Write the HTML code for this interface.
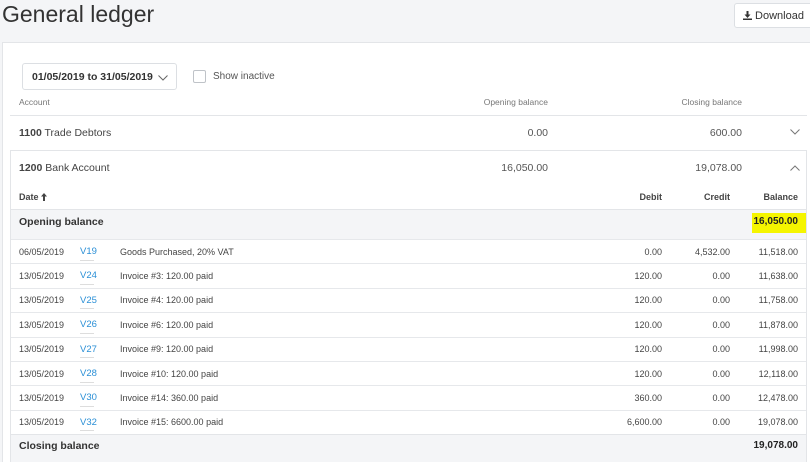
<!DOCTYPE html>
<html><head><meta charset="utf-8"><style>
*{margin:0;padding:0;box-sizing:border-box}
html,body{width:810px;height:462px;overflow:hidden}
body{background:#f4f5f7;font-family:"Liberation Sans",sans-serif;color:#3b3b3b;position:relative}
.a{position:absolute;white-space:nowrap}
.r{text-align:right}
.panel{position:absolute;left:2px;top:42px;width:820px;height:430px;background:#fff;border:1px solid #e3e5e8}
.box{position:absolute;left:10px;top:150px;width:797px;height:320px;border:1px solid #e3e5e8;background:#fff}
.row{position:absolute;left:11px;width:795px;border-top:1px solid #e6e8eb}
.s{font-size:9px;color:#444}
.lnk{color:#2a8fd6;font-size:9.5px}
</style></head><body>
<div class="a" style="left:2px;top:1px;font-size:23px;color:#333">General ledger</div>
<div class="a" style="left:734px;top:3px;width:80px;height:25px;background:#fff;border:1px solid #dcdfe3;border-radius:3px;font-size:11px;padding:6px 0 0 8px;color:#333">
<svg width="9" height="9" viewBox="0 0 9 9" style="vertical-align:-1px"><path d="M3.5 0h2v3.5h2L4.5 7 1.5 3.5h2z" fill="#333"/><rect x="0" y="7.5" width="9" height="1.5" fill="#333"/></svg> Download</div>
<div class="panel"></div>
<div class="a" style="left:22px;top:63px;width:155px;height:27px;border:1px solid #dcdfe3;border-radius:3px;font-size:10.5px;font-weight:bold;padding:7px 0 0 9px;color:#333">01/05/2019 to 31/05/2019
<svg width="10" height="6" viewBox="0 0 10 6" style="position:absolute;left:135px;top:11px"><path d="M0.5 0.5L5 5 9.5 0.5" fill="none" stroke="#666"/></svg></div>
<div class="a" style="left:193px;top:70px;width:13px;height:13px;border:1px solid #bfc3c8;border-radius:2px"></div>
<div class="a" style="left:213px;top:71px;font-size:10px;color:#555">Show inactive</div>
<div class="a" style="left:19px;top:97px;font-size:8.5px;color:#777">Account</div>
<div class="a r" style="left:448px;top:97px;width:100px;font-size:8.5px;color:#777">Opening balance</div>
<div class="a r" style="left:642px;top:97px;width:100px;font-size:8.5px;color:#777">Closing balance</div>
<div class="a" style="left:10px;top:115px;width:797px;border-top:1px solid #e3e5e8"></div>
<div class="a" style="left:19px;top:127px;font-size:10.5px;color:#444"><b>1100</b> Trade Debtors</div>
<div class="a r" style="left:448px;top:127px;width:100px;font-size:10.5px;color:#555">0.00</div>
<div class="a r" style="left:642px;top:127px;width:100px;font-size:10.5px;color:#555">600.00</div>
<svg class="a" style="left:790px;top:129px" width="10" height="6" viewBox="0 0 10 6"><path d="M0.5 0.5L5 5 9.5 0.5" fill="none" stroke="#777"/></svg>
<div class="box"></div>
<div class="a" style="left:19px;top:162px;font-size:10.5px;color:#444"><b>1200</b> Bank Account</div>
<div class="a r" style="left:448px;top:162px;width:100px;font-size:10.5px;color:#555">16,050.00</div>
<div class="a r" style="left:642px;top:162px;width:100px;font-size:10.5px;color:#555">19,078.00</div>
<svg class="a" style="left:790px;top:165px" width="10" height="6" viewBox="0 0 10 6"><path d="M0.5 5.5L5 1 9.5 5.5" fill="none" stroke="#777"/></svg>
<div class="a" style="left:19px;top:192px;font-size:9px;font-weight:bold;color:#444">Date</div>
<svg class="a" style="left:41px;top:193px" width="6" height="8" viewBox="0 0 6 8"><path d="M3 0L0 3.5h2V8h2V3.5h2z" fill="#444"/></svg>
<div class="a r" style="left:600px;top:192px;width:62px;font-size:9px;font-weight:bold;color:#444">Debit</div>
<div class="a r" style="left:670px;top:192px;width:60px;font-size:9px;font-weight:bold;color:#444">Credit</div>
<div class="a r" style="left:730px;top:192px;width:68px;font-size:9px;font-weight:bold;color:#444">Balance</div>
<div class="a" style="left:11px;top:209px;width:795px;height:30px;background:#f4f5f7;border-top:1px solid #e3e5e8"></div>
<div class="a" style="left:19px;top:216px;font-size:10.5px;font-weight:bold;color:#333">Opening balance</div>
<div class="a" style="left:752px;top:213px;width:54px;height:20px;background:#f5f500"></div>
<div class="a r" style="left:730px;top:216px;width:68px;font-size:10px;font-weight:bold;color:#222">16,050.00</div>
<div id="rows"></div>
<div class="a" style="left:11px;top:434px;width:795px;height:30px;background:#f4f5f7;border-top:1px solid #e3e5e8"></div>
<div class="a" style="left:19px;top:440px;font-size:10.5px;font-weight:bold;color:#333">Closing balance</div>
<div class="a r" style="left:730px;top:440px;width:68px;font-size:10px;font-weight:bold;color:#222">19,078.00</div>
<script>
var d=[["06/05/2019","V19","Goods Purchased, 20% VAT","0.00","4,532.00","11,518.00"],
["13/05/2019","V24","Invoice #3: 120.00 paid","120.00","0.00","11,638.00"],
["13/05/2019","V25","Invoice #4: 120.00 paid","120.00","0.00","11,758.00"],
["13/05/2019","V26","Invoice #6: 120.00 paid","120.00","0.00","11,878.00"],
["13/05/2019","V27","Invoice #9: 120.00 paid","120.00","0.00","11,998.00"],
["13/05/2019","V28","Invoice #10: 120.00 paid","120.00","0.00","12,118.00"],
["13/05/2019","V30","Invoice #14: 360.00 paid","360.00","0.00","12,478.00"],
["13/05/2019","V32","Invoice #15: 6600.00 paid","6,600.00","0.00","19,078.00"]];
var h="";
d.forEach(function(r,i){var y=239+i*24.4;
h+='<div class="row" style="top:'+y+'px;height:25px"></div>';
var t=y+7.5;
h+='<div class="a s" style="left:19px;top:'+t+'px">'+r[0]+'</div>';
h+='<div class="a lnk" style="left:80px;top:'+(t-0.5)+'px">'+r[1]+'</div>';
h+='<div class="a" style="left:80px;top:'+(t+13)+'px;width:14px;border-top:1px solid #ddd"></div>';
h+='<div class="a s" style="left:120px;top:'+t+'px">'+r[2]+'</div>';
h+='<div class="a s r" style="left:600px;top:'+t+'px;width:62px">'+r[3]+'</div>';
h+='<div class="a s r" style="left:670px;top:'+t+'px;width:60px">'+r[4]+'</div>';
h+='<div class="a s r" style="left:730px;top:'+t+'px;width:68px">'+r[5]+'</div>';});
document.getElementById("rows").innerHTML=h;
</script>
</body></html>
